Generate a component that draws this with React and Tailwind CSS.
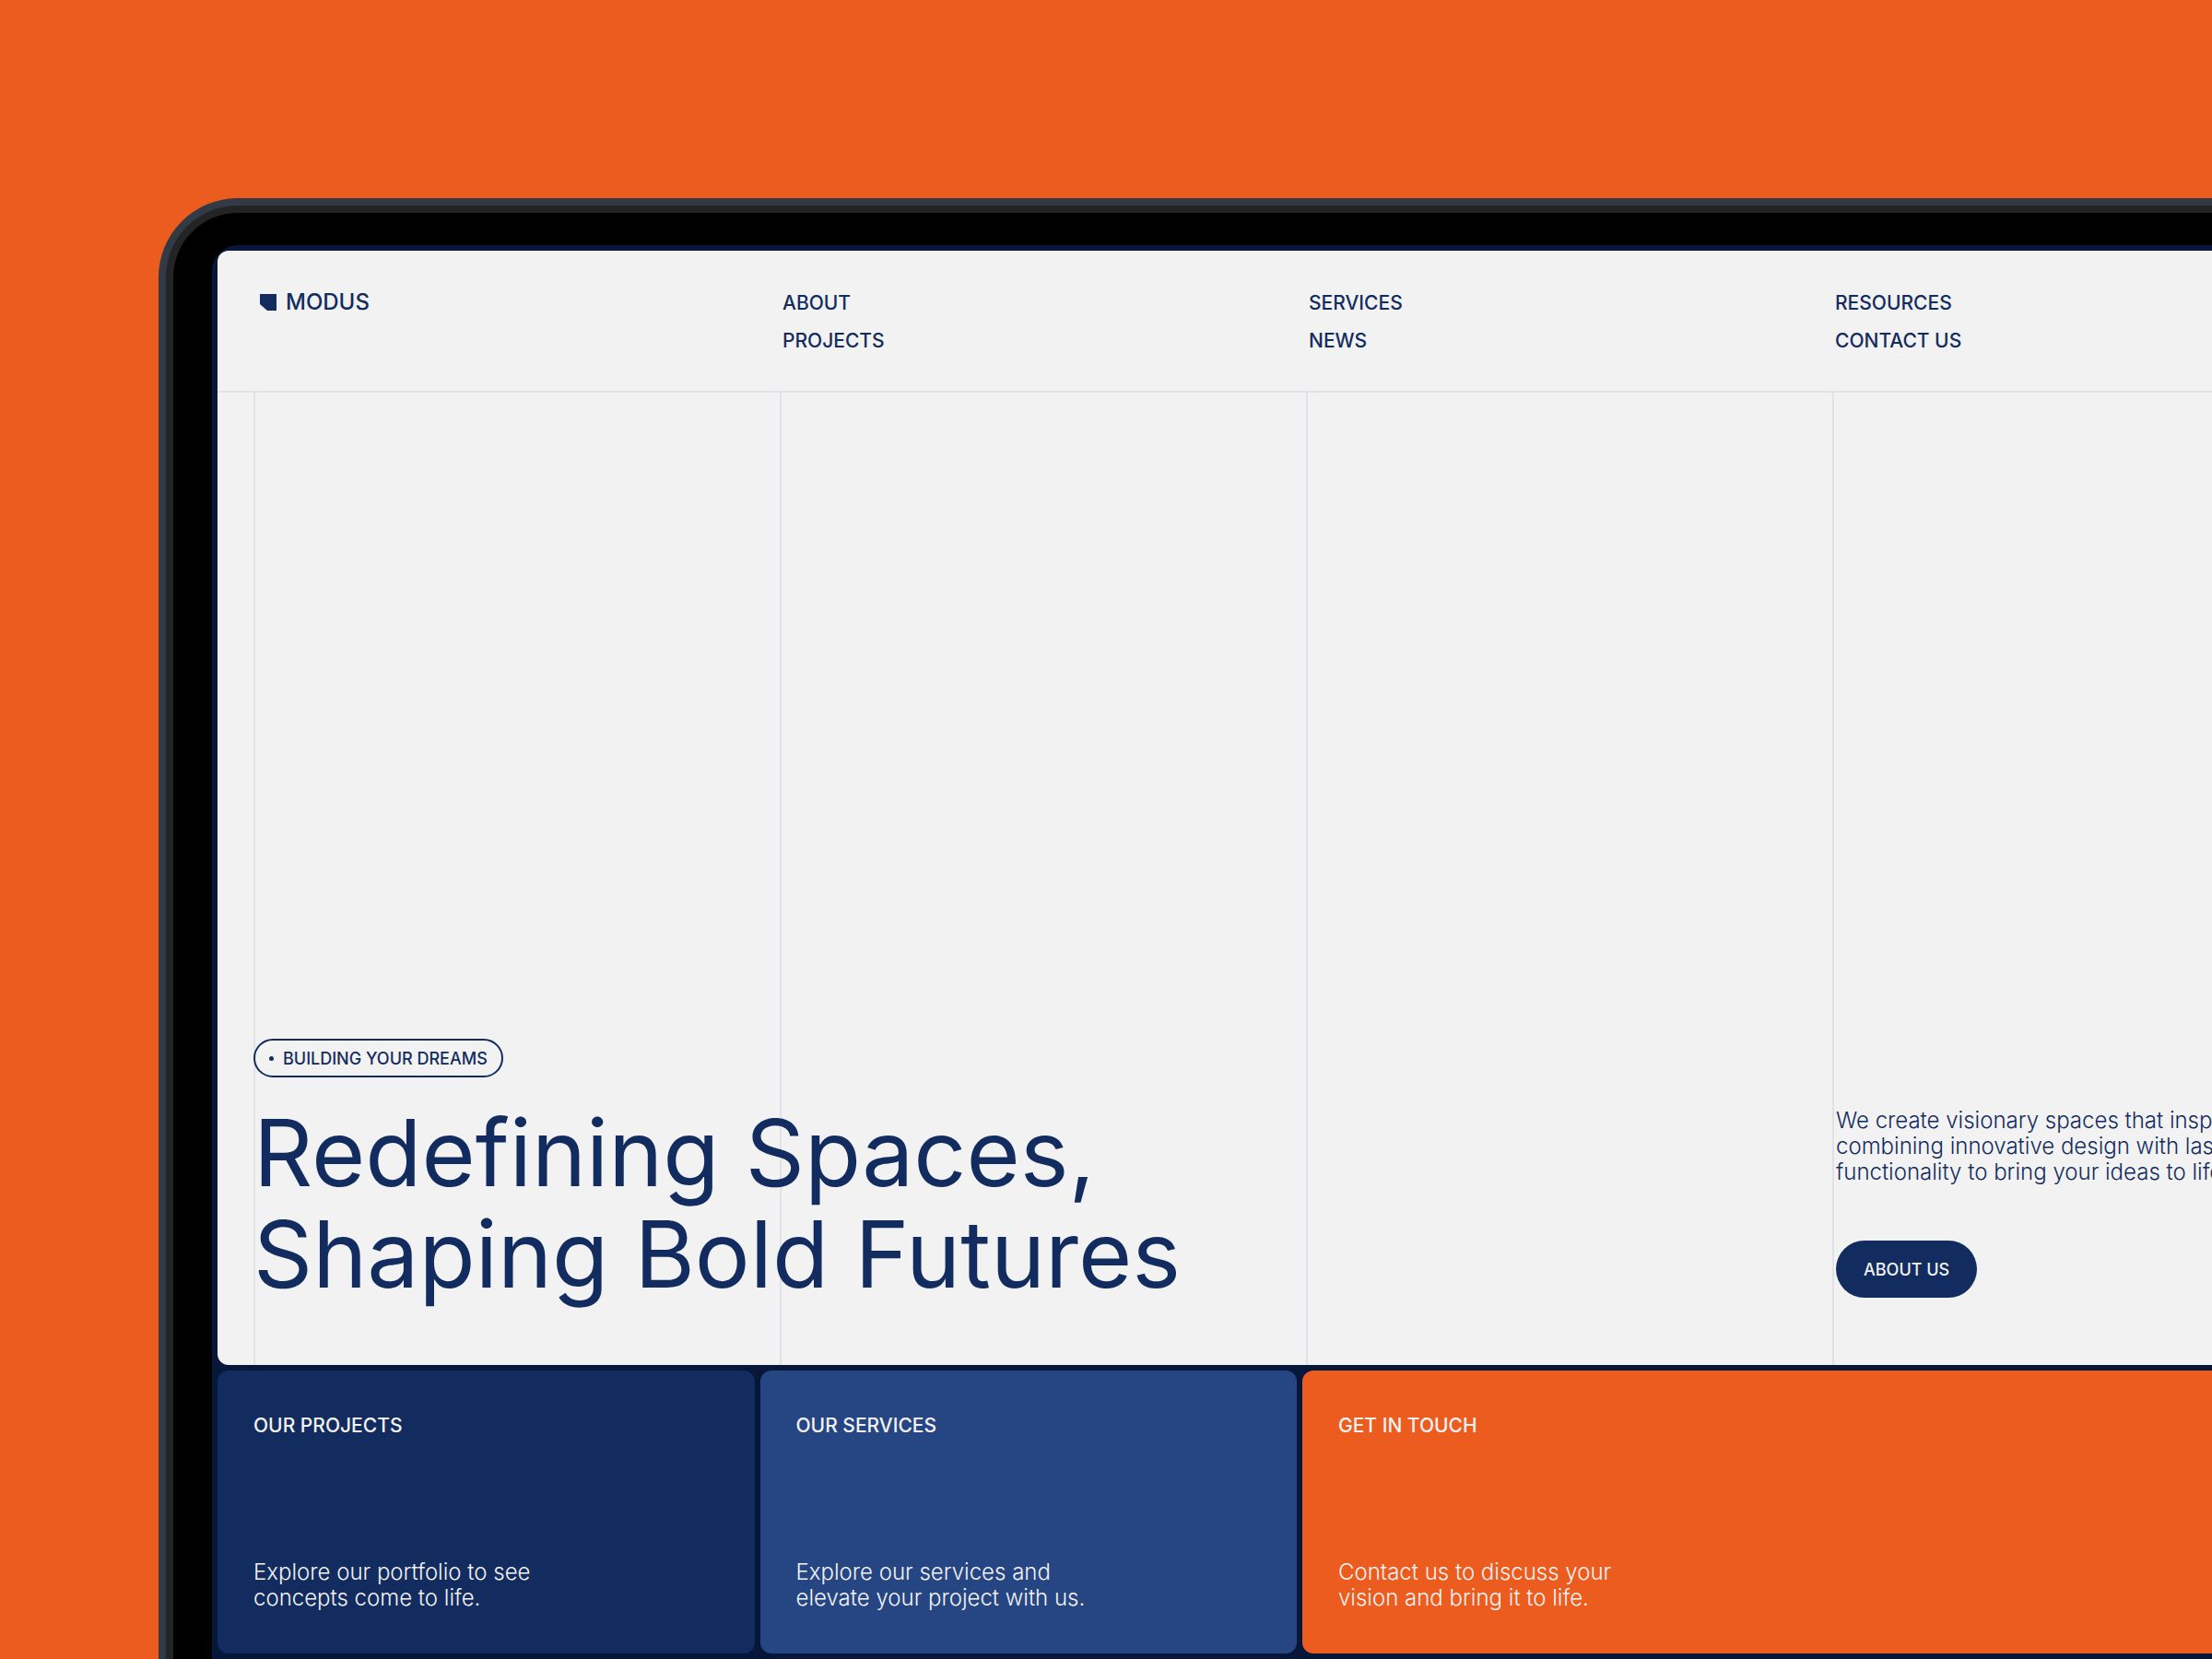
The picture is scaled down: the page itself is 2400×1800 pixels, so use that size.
import React from "react";

const navColumns = [
  [
    { name: "ABOUT", path: "#about" },
    { name: "PROJECTS", path: "#projects" },
  ],
  [
    { name: "SERVICES", path: "#services" },
    { name: "NEWS", path: "#news" },
  ],
  [
    { name: "RESOURCES", path: "#resources" },
    { name: "CONTACT US", path: "#contact" },
  ],
];

const cards = [
  {
    title: "OUR PROJECTS",
    lines: ["Explore our portfolio to see", "concepts come to life."],
    path: "#projects",
    classes: "bg-[#122c5f]",
  },
  {
    title: "OUR SERVICES",
    lines: ["Explore our services and", "elevate your project with us."],
    path: "#services",
    classes: "bg-[#264683]",
  },
  {
    title: "GET IN TOUCH",
    lines: ["Contact us to discuss your", "vision and bring it to life."],
    path: "#contact",
    classes: "col-span-2 bg-[#ec5c1e]",
  },
];

const Logo = () => (
  <a href="#home" className="flex h-10 items-center gap-2.5 pl-[7px]">
    <svg viewBox="0 0 18 18" className="size-[18px]" fill="currentColor">
      <path d="M0 0h18v18H8L0 11z" />
    </svg>
    <span className="text-2xl font-medium">MODUS</span>
  </a>
);

const Header = () => (
  <header className="grid grid-cols-4 gap-x-3.5 border-b-2 border-[#e0e2e6] px-[39px] pt-9 pb-[34px]">
    <Logo />
    {navColumns.map((links) => (
      <nav key={links[0].name} className="flex flex-col items-start pl-[3px]">
        {links.map((link) => (
          <a
            key={link.name}
            href={link.path}
            className="text-[21px] leading-[41px] font-medium"
          >
            {link.name}
          </a>
        ))}
      </nav>
    ))}
  </header>
);

const Hero = () => (
  <section className="grid grow">
    {/* Column guides, stacked under the content */}
    <div className="col-start-1 row-start-1 grid grid-cols-4 gap-x-3.5 px-[39px]">
      <div className="border-l-2 border-[#e0e2e8]" />
      <div className="border-l-2 border-[#e0e2e8]" />
      <div className="border-l-2 border-[#e0e2e8]" />
      <div className="border-l-2 border-[#e0e2e8]" />
    </div>

    <div className="z-10 col-start-1 row-start-1 grid grid-cols-4 items-end gap-x-3.5 px-[39px]">
      <div className="col-span-3 flex flex-col items-start gap-[27px] pb-[65px]">
        <p className="flex h-[42px] items-center gap-2.5 rounded-full border-2 border-[#122c5f] px-[15px] text-[18px] font-medium">
          <span className="size-[5px] rounded-full bg-[#122c5f]" />
          BUILDING YOUR DREAMS
        </p>
        <h1 className="text-[100px] leading-[110px]">
          Redefining Spaces,
          <br />
          Shaping Bold Futures
        </h1>
      </div>

      <div className="flex flex-col items-start gap-[60px] pb-[73px] pl-1">
        <p className="text-2xl leading-7 font-light">
          We create visionary spaces that inspire,
          <br />
          combining innovative design with lasting
          <br />
          functionality to bring your ideas to life.
        </p>
        <button className="h-[62px] rounded-full bg-[#122c5f] px-[30px] text-[18px] font-medium text-[#f2f2f2]">
          ABOUT US
        </button>
      </div>
    </div>
  </section>
);

const Card = ({ title, lines, path, classes }) => (
  <a
    href={path}
    className={`flex min-h-[307px] flex-col justify-between rounded-xl px-[39px] py-[46px] text-[#f2f2f2] ${classes}`}
  >
    <h2 className="text-[21px] leading-7 font-medium">{title}</h2>
    <p className="text-2xl leading-7 font-light">
      {lines[0]}
      <br />
      {lines[1]}
    </p>
  </a>
);

const App = () => {
  return (
    <div className="flex min-h-screen flex-col overflow-hidden bg-[#ec5c1e] pt-[215px] pl-[172px] font-['Inter',sans-serif] text-[#122c5f]">
      {/* The tablet runs past the right and bottom edges of the window */}
      <div className="-mr-[248px] flex grow flex-col rounded-t-[86px] bg-[#323a45] px-2 pt-2">
        <div className="flex grow flex-col rounded-t-[78px] bg-[#242424] px-2 pt-2">
          <div className="flex grow flex-col rounded-t-[70px] bg-black px-[42px] pt-[35px]">
            <div className="flex grow flex-col gap-1.5 rounded-t-[28px] bg-[#06173a] p-1.5">
              <main className="flex grow flex-col rounded-xl bg-[#f2f2f2]">
                <Header />
                <Hero />
              </main>
              <div className="grid grid-cols-4 gap-1.5">
                {cards.map((card) => (
                  <Card key={card.title} {...card} />
                ))}
              </div>
            </div>
          </div>
        </div>
      </div>
    </div>
  );
};

export default App;
